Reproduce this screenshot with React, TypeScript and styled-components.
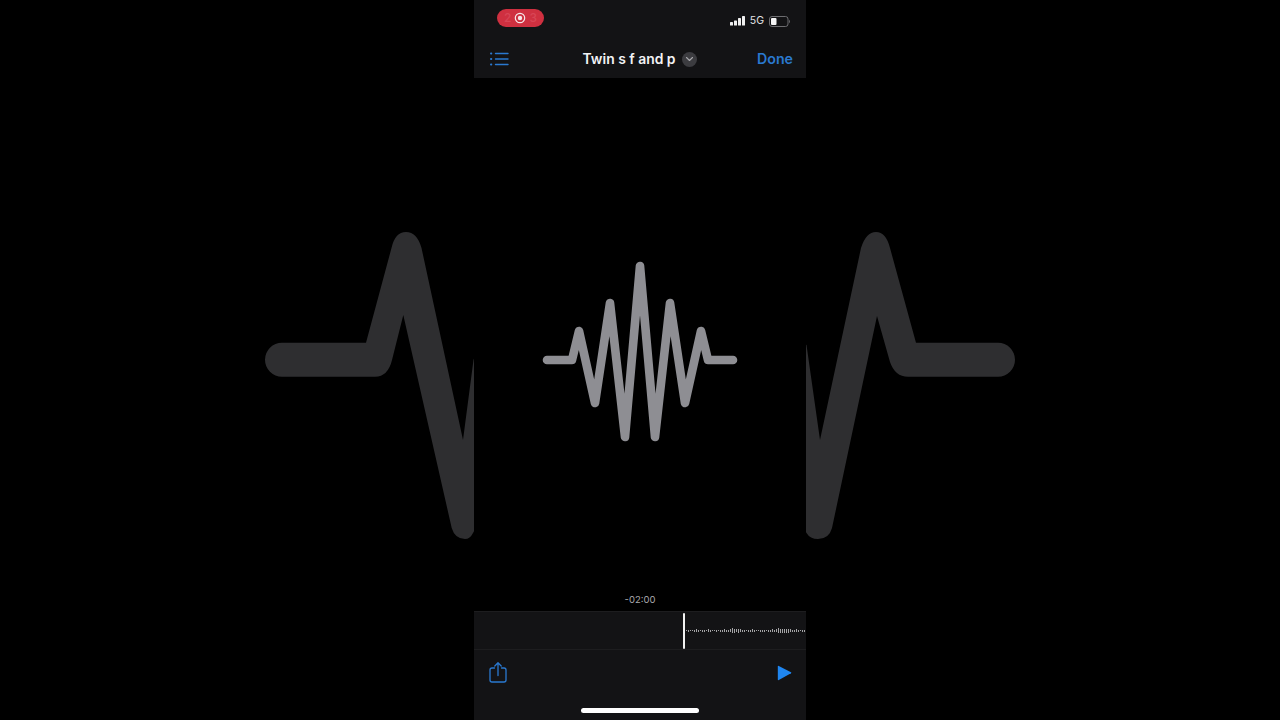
import React from "react";
import styled, { createGlobalStyle } from "styled-components";

const Global = createGlobalStyle`
  html, body { margin: 0; padding: 0; background: #000; }
  #root { width: 1280px; height: 720px; overflow: hidden; }
`;

const Stage = styled.div`
  position: relative;
  width: 1280px;
  height: 720px;
  background: #000;
  display: flex;
  justify-content: center;
  font-family: Inter, "Liberation Sans", sans-serif;
`;

const Backdrop = styled.svg`
  position: absolute;
  inset: 0;
  width: 1280px;
  height: 720px;
`;

const Phone = styled.div`
  position: relative;
  width: 332px;
  height: 720px;
  background: #000;
  display: flex;
  flex-direction: column;
`;

const TopBar = styled.header`
  height: 78px;
  background: #131315;
  display: flex;
  flex-direction: column;
`;

const StatusRow = styled.div`
  height: 40px;
  padding: 9px 15px 0 23px;
  box-sizing: border-box;
  display: flex;
  justify-content: space-between;
  align-items: flex-start;
`;

const RecordPill = styled.div`
  width: 47px;
  height: 18px;
  border-radius: 9px;
  background: #cf3040;
  display: flex;
  align-items: center;
  justify-content: center;
  gap: 3px;
`;

const PillDigit = styled.span`
  color: #d84555;
  font-size: 12px;
  line-height: 18px;
  font-weight: 500;
`;

const StatusGroup = styled.div`
  display: flex;
  align-items: center;
  gap: 5px;
  height: 14px;
  margin-top: 5px;
`;

const NetworkLabel = styled.span`
  color: #e2e2e4;
  font-size: 10.5px;
  line-height: 14px;
  font-weight: 400;
`;

const NavRow = styled.div`
  flex: 1;
  padding: 0 13px;
  display: grid;
  grid-template-columns: 1fr auto 1fr;
  align-items: center;
`;

const ListIcon = styled.svg`
  margin-left: 3px;
`;

const TitleGroup = styled.div`
  display: flex;
  align-items: center;
  gap: 7px;
`;

const Title = styled.span`
  color: #f2f2f4;
  font-size: 13.9px;
  line-height: 18px;
  font-weight: 600;
  white-space: nowrap;
`;

const ChevronBadge = styled.span`
  width: 15px;
  height: 15px;
  border-radius: 50%;
  background: #3c3c40;
  display: flex;
  align-items: center;
  justify-content: center;
`;

const DoneLabel = styled.span`
  color: #2a79d0;
  font-size: 14.2px;
  line-height: 18px;
  font-weight: 600;
  justify-self: end;
`;

const Canvas = styled.main`
  flex: 1;
  display: flex;
  align-items: center;
  justify-content: center;
  padding-top: 31px;
`;

const Elapsed = styled.div`
  height: 0;
  display: flex;
  justify-content: center;
`;

const ElapsedText = styled.span`
  color: #a8a8ac;
  font-size: 9.5px;
  line-height: 20px;
  transform: translateY(-21px);
`;

const Bottom = styled.footer`
  height: 109px;
  background: #131315;
  display: flex;
  flex-direction: column;
`;

const Timeline = styled.div`
  height: 37px;
  border-top: 1px solid #1d1d1f;
  border-bottom: 1px solid #1d1d1f;
  display: flex;
  align-items: center;
  padding-left: 209px;
  overflow: hidden;
`;

const Playhead = styled.div`
  width: 2px;
  height: 36px;
  background: #f2f2f2;
  border-radius: 1px;
  flex: none;
`;

const Samples = styled.div`
  display: flex;
  align-items: center;
  gap: 1px;
  margin-left: 1px;
  height: 100%;
  flex: none;
`;

const Sample = styled.i<{ $h: number }>`
  display: block;
  width: 1px;
  height: ${(p) => p.$h}px;
  background: #a4a4a6;
  flex: none;
`;

const Controls = styled.div`
  padding: 12px 14px 0 15px;
  display: flex;
  justify-content: space-between;
  align-items: flex-start;
`;

const PlayIcon = styled.svg`
  margin-top: 3px;
`;

const HomeRow = styled.div`
  margin-top: 25px;
  display: flex;
  justify-content: center;
`;

const HomeBar = styled.div`
  width: 118px;
  height: 5px;
  border-radius: 3px;
  background: #fff;
`;

const wave =
  "M-93 0 H-68 L-61 -29 L-45 43 L-30 -57 L-15 77 L0 -94 L15 77 L30 -57 L45 43 L61 -29 L68 0 H93";

const leftShape =
  "M282 342.7 H366 L391.5 248 Q395 232 406 232 Q417 232 421.5 248 L463 440 L473.5 360 L480 340 V520 L473 533 Q470 539 465 539 Q455 539 451.7 528 L403.3 315 L392 360 Q388 376.7 375 376.7 H282 A17 17 0 0 1 282 342.7 Z";
const rightShape =
  "M998 342.7 H916 L890 248 Q886 232 876 232 Q866 232 861 248 L820 440 L806.5 345 L800 340 V520 L806.5 533 Q810 539 818 539 Q829 539 832 528 L877 316 L890 362 Q895 376.7 908 376.7 H998 A17 17 0 0 0 998 342.7 Z";

const sampleHeights = [
  1,2,1,1,2,3,2,1,2,2,1,3,2,1,1,2,1,2,2,3,2,2,3,5,4,3,4,3,2,2,1,2,2,3,2,1,1,2,2,2,1,2,2,3,2,3,5,4,4,4,4,4,3,2,2,3,2,1,2,2
];

export default function App() {
  return (
    <Stage>
      <Global />
      <Backdrop viewBox="0 0 1280 720">
        <path d={leftShape} fill="#2e2e30" />
        <path d={rightShape} fill="#2e2e30" />
      </Backdrop>
      <Phone>
        <TopBar>
          <StatusRow>
            <RecordPill>
              <PillDigit>2</PillDigit>
              <svg width="12" height="12" viewBox="0 0 12 12">
                <circle cx="6" cy="6" r="4.7" fill="none" stroke="#f6e6e8" strokeWidth="1.2" />
                <circle cx="6" cy="6" r="2.2" fill="#f6e6e8" />
              </svg>
              <PillDigit>3</PillDigit>
            </RecordPill>
            <StatusGroup>
              <svg width="15" height="10" viewBox="0 0 15 10">
                <rect x="0" y="6" width="3" height="3.6" rx="0.6" fill="#f0f0f0" />
                <rect x="4" y="4.4" width="3" height="5.2" rx="0.6" fill="#f0f0f0" />
                <rect x="8" y="2" width="3" height="7.6" rx="0.6" fill="#f0f0f0" />
                <rect x="12" y="0" width="3" height="9.6" rx="0.6" fill="#f0f0f0" />
              </svg>
              <NetworkLabel>5G</NetworkLabel>
              <svg width="22" height="11" viewBox="0 0 22 11">
                <rect x="0.5" y="0.5" width="18.5" height="10" rx="2.5" fill="none" stroke="#77777a" strokeWidth="0.9" />
                <rect x="2" y="2" width="5.5" height="7" rx="1" fill="#f6f6f6" />
                <path d="M20.2 3.8 C21.3 4.2 21.3 6.8 20.2 7.2 Z" fill="#77777a" />
              </svg>
            </StatusGroup>
          </StatusRow>
          <NavRow>
            <ListIcon width="19" height="14" viewBox="0 0 19 14" fill="none" stroke="#2a79d0" strokeWidth="1.4" strokeLinecap="round">
              <path d="M5.5 1.5 H18 M5.5 7 H18 M5.5 12.5 H18" />
              <path d="M1 1.5 H1.3 M1 7 H1.3 M1 12.5 H1.3" strokeWidth="2" />
            </ListIcon>
            <TitleGroup>
              <Title>Twin s f and p</Title>
              <ChevronBadge>
                <svg width="9" height="6" viewBox="0 0 9 6" fill="none" stroke="#a8a8ac" strokeWidth="1.1" strokeLinecap="round" strokeLinejoin="round">
                  <path d="M1.5 1.5 L4.5 4.5 L7.5 1.5" />
                </svg>
              </ChevronBadge>
            </TitleGroup>
            <DoneLabel>Done</DoneLabel>
          </NavRow>
        </TopBar>
        <Canvas>
          <svg width="200" height="200" viewBox="-100 -100 200 200">
            <path d={wave} fill="none" stroke="#8e8e93" strokeWidth={8.6} strokeLinecap="round" strokeLinejoin="round" />
          </svg>
        </Canvas>
        <Elapsed>
          <ElapsedText>-02:00</ElapsedText>
        </Elapsed>
        <Bottom>
          <Timeline>
            <Playhead />
            <Samples>
              {sampleHeights.map((h, i) => (
                <Sample key={i} $h={h} />
              ))}
            </Samples>
          </Timeline>
          <Controls>
            <svg width="18" height="21" viewBox="0 0 18 21" fill="none" stroke="#2a79d0" strokeWidth="1.3" strokeLinecap="round" strokeLinejoin="round">
              <path d="M5.5 6 H3 A2 2 0 0 0 1 8 V18 A2 2 0 0 0 3 20 H15 A2 2 0 0 0 17 18 V8 A2 2 0 0 0 15 6 H12.5" />
              <path d="M9 13.5 V1 M5.8 4 L9 0.8 L12.2 4" />
            </svg>
            <PlayIcon width="15" height="16" viewBox="0 0 15 16">
              <path d="M0.8 1.5 Q0.8 0.4 1.8 0.9 L14 7.2 Q14.8 7.7 14 8.3 L1.8 15 Q0.8 15.5 0.8 14.4 Z" fill="#1f86f0" />
            </PlayIcon>
          </Controls>
          <HomeRow>
            <HomeBar />
          </HomeRow>
        </Bottom>
      </Phone>
    </Stage>
  );
}
